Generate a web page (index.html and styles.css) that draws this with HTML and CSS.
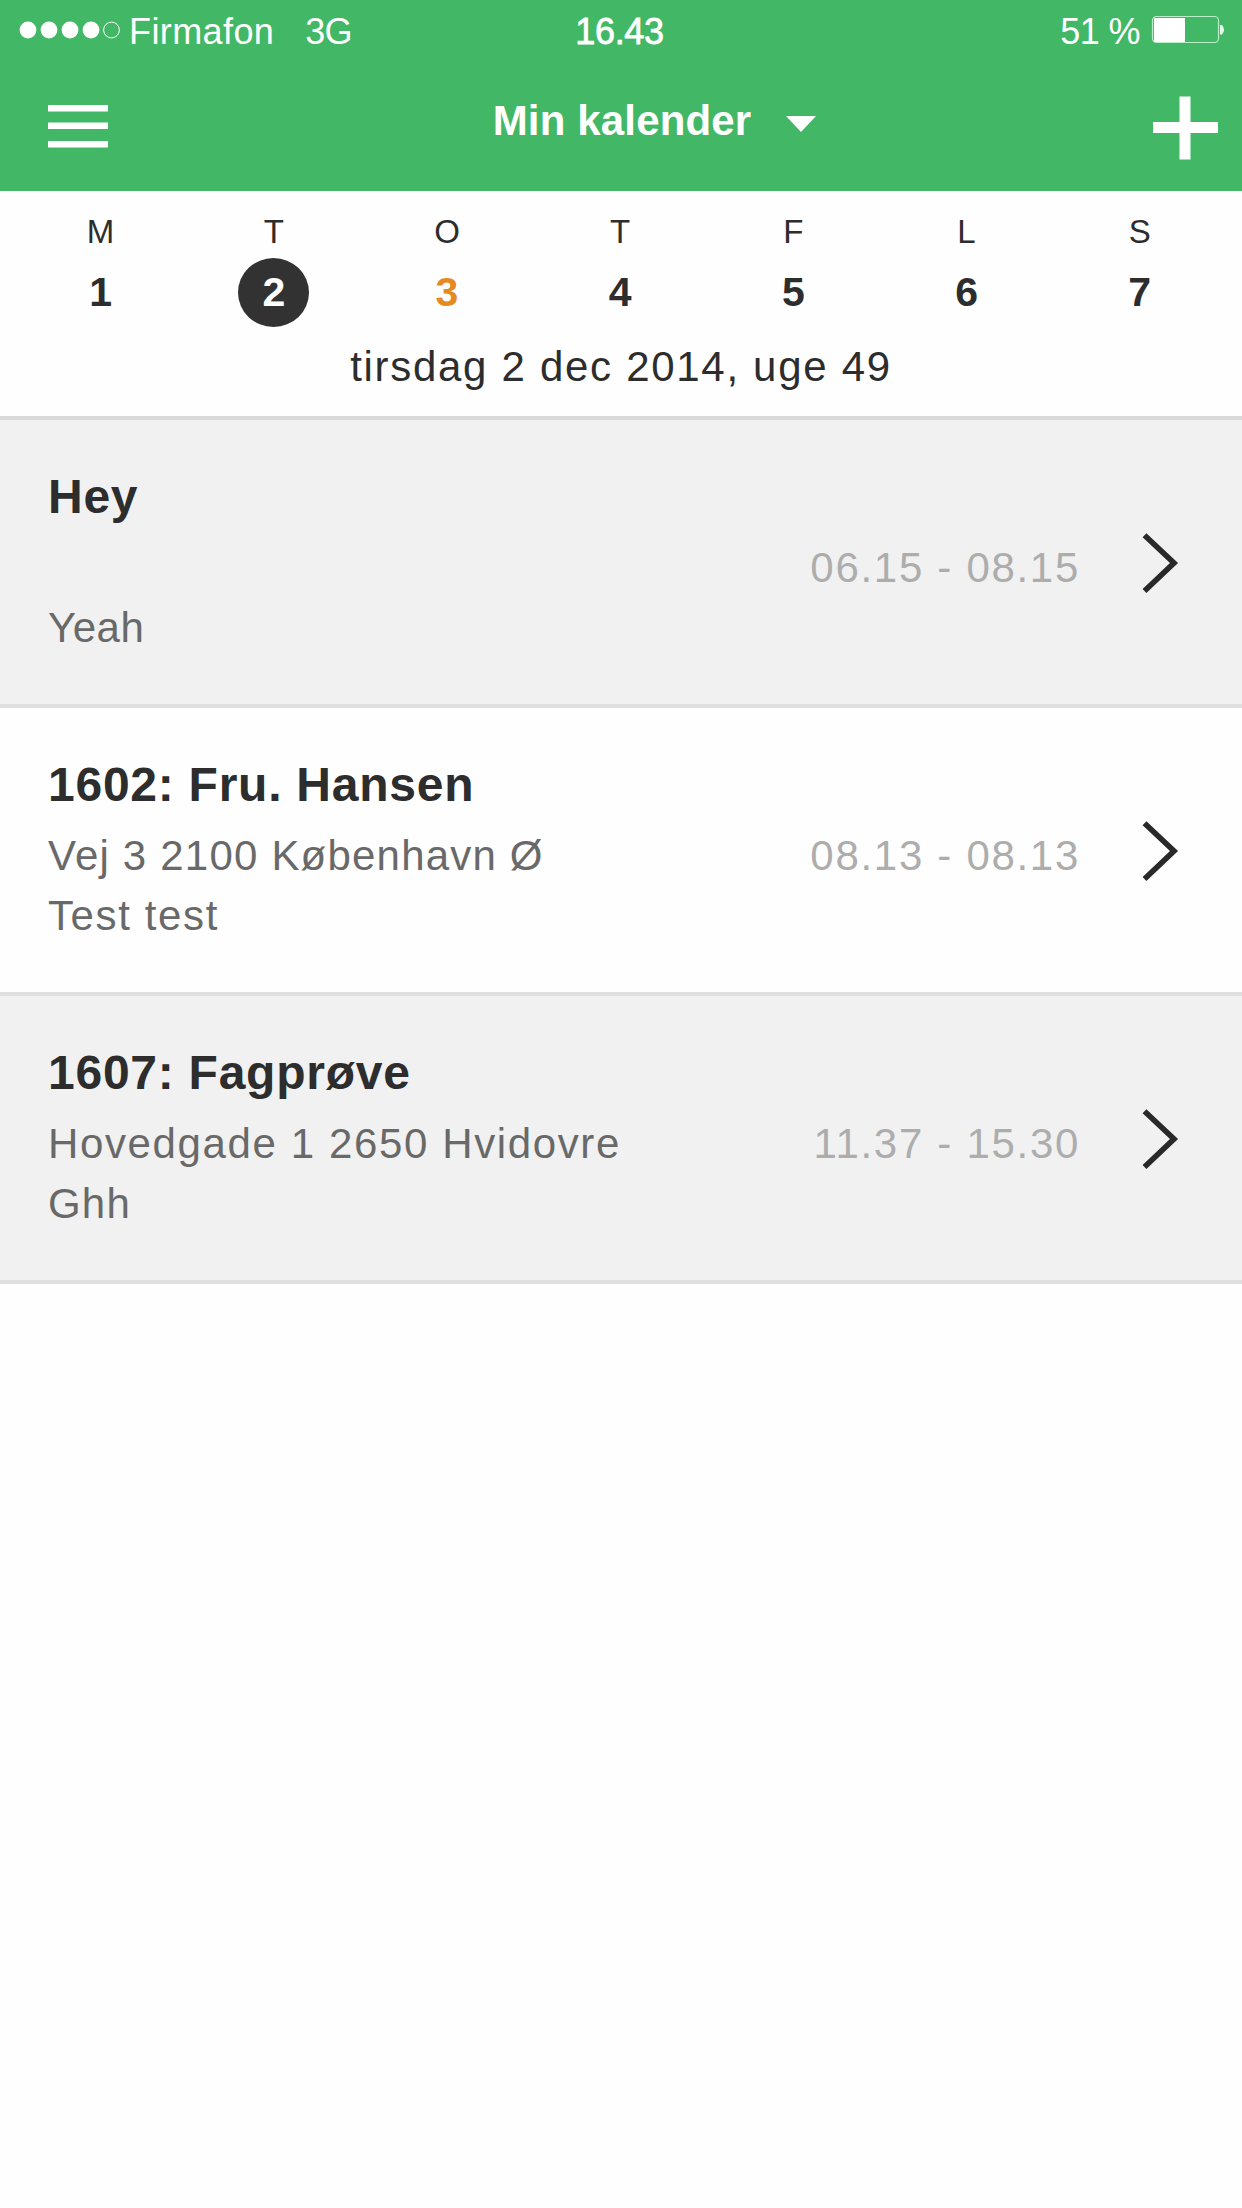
FILE: index.html
```html
<!DOCTYPE html>
<html lang="da">
<head>
<meta charset="utf-8">
<title>Min kalender</title>
<link rel="stylesheet" href="styles.css">
</head>
<body>
<header class="header">
  <div class="status">
    <div class="carrier">
      <svg class="signal" width="102" height="18" viewBox="0 0 102 18"><g fill="#fff"><circle cx="9" cy="9" r="8.4"/><circle cx="30" cy="9" r="8.4"/><circle cx="51" cy="9" r="8.4"/><circle cx="72" cy="9" r="8.4"/></g><circle cx="92.5" cy="9" r="7.9" fill="none" stroke="#fff"/></svg>
      <span class="operator">Firmafon</span>
      <span class="network">3G</span>
    </div>
    <span class="clock">16.43</span>
    <div class="power">
      <span class="percent">51 %</span>
      <svg class="battery" width="76" height="30" viewBox="0 0 76 30"><rect x="1.5" y="1.5" width="66" height="26" rx="4" fill="none" stroke="#b9efc8" stroke-width="1.2"/><path d="M4 3H34V27H4Q3 27 3 26V4Q3 3 4 3Z" fill="#fff"/><path d="M69 10h2q4 4.500 0 9.500h-2z" fill="#e5fbea"/></svg>
    </div>
  </div>
  <nav class="nav">
    <svg class="menu" width="62" height="44" viewBox="0 0 62 44"><path d="M1 4.300H61M1 21.800H61M1 40.300H61" stroke="#fff" stroke-width="6.400"/></svg>
    <div class="title"><span>Min kalender</span><svg class="caret" width="30" height="16" viewBox="0 0 30 16"><path d="M0 0H30L15 16Z" fill="#fff"/></svg></div>
    <svg class="add" width="65" height="64" viewBox="0 0 65 64"><path d="M0 31.500H65M32 0.500V63.500" stroke="#fff" stroke-width="11"/></svg>
  </nav>
</header>
<section class="week">
  <div class="days">
    <div class="day"><span class="name">M</span><span class="num">1</span></div>
    <div class="day"><span class="name">T</span><span class="num selected">2</span></div>
    <div class="day"><span class="name">O</span><span class="num today">3</span></div>
    <div class="day"><span class="name">T</span><span class="num">4</span></div>
    <div class="day"><span class="name">F</span><span class="num">5</span></div>
    <div class="day"><span class="name">L</span><span class="num">6</span></div>
    <div class="day"><span class="name">S</span><span class="num">7</span></div>
  </div>
  <div class="date">tirsdag 2 dec 2014, uge 49</div>
</section>
<main class="list">
  <article class="event">
    <div class="details"><h2>Hey</h2><p></p><p class="tight">Yeah</p></div>
    <time class="time">06.15 - 08.15</time>
    <svg class="chevron" width="38" height="62" viewBox="0 0 38 62"><path d="M2.500 3.200L32 31L2.500 59" fill="none" stroke="#292929" stroke-width="5.600"/></svg>
  </article>
  <article class="event">
    <div class="details"><h2>1602: Fru. Hansen</h2><p>Vej 3 2100 København Ø</p><p class="wide">Test test</p></div>
    <time class="time">08.13 - 08.13</time>
    <svg class="chevron" width="38" height="62" viewBox="0 0 38 62"><path d="M2.500 3.200L32 31L2.500 59" fill="none" stroke="#292929" stroke-width="5.600"/></svg>
  </article>
  <article class="event">
    <div class="details"><h2>1607: Fagprøve</h2><p class="wide">Hovedgade 1 2650 Hvidovre</p><p>Ghh</p></div>
    <time class="time">11.37 - 15.30</time>
    <svg class="chevron" width="38" height="62" viewBox="0 0 38 62"><path d="M2.500 3.200L32 31L2.500 59" fill="none" stroke="#292929" stroke-width="5.600"/></svg>
  </article>
</main>
</body>
</html>
```
FILE: styles.css
```css
* { box-sizing: border-box; }
body {
  margin: 0;
  min-height: 2208px;
  background: #fefefe;
  color: #2d2d2d;
  font-family: "Liberation Sans", Arial, sans-serif;
}
svg { display: block; flex: none; }
.header { height: 191px; background: #42b866; color: #fff; }
.status {
  display: grid;
  grid-template-columns: 1fr auto 1fr;
  height: 63px;
  padding: 0 15px 0 19px;
  font-size: 36px;
  line-height: 64px;
  white-space: nowrap;
}
.carrier { display: flex; }
.signal { margin-top: 21px; }
.operator { margin-left: 8px; letter-spacing: 0.4px; }
.network { margin-left: 31px; letter-spacing: -0.7px; }
.clock { margin-right: 7px; -webkit-text-stroke: 0.8px #fff; letter-spacing: -0.3px; }
.power { display: flex; justify-content: flex-end; }
.percent { letter-spacing: -0.6px; }
.battery { margin: 15px 0 0 11px; }
.nav {
  display: grid;
  grid-template-columns: 1fr auto 1fr;
  height: 128px;
  padding: 0 24px 0 47px;
}
.menu { margin-top: 41px; }
.title {
  display: flex;
  margin-left: 44px;
  font-size: 42px;
  font-weight: 700;
  line-height: 116px;
  letter-spacing: 0.15px;
  white-space: nowrap;
}
.caret { margin: 53px 0 0 35px; }
.add { margin-top: 33px; justify-self: end; }
.week {
  height: 229px;
  padding-top: 21px;
  border-bottom: 4px solid #dadada;
}
.days { display: grid; grid-template-columns: repeat(7, 173.2px); padding-left: 14px; }
.day { display: flex; flex-direction: column; align-items: center; }
.name { font-size: 33px; line-height: 40px; }
.num {
  width: 71px;
  height: 69px;
  margin-top: 6px;
  border-radius: 50%;
  font-size: 41px;
  font-weight: 700;
  line-height: 68px;
  text-align: center;
}
.selected { background: #323232; color: #fff; }
.today { color: #e58a22; }
.date {
  margin-top: 10px;
  font-size: 42px;
  line-height: 60px;
  letter-spacing: 1.7px;
  text-align: center;
}
.event {
  display: flex;
  height: 288px;
  padding: 47px 62px 0 48px;
  border-bottom: 4px solid #dfdfdf;
}
.event:nth-child(odd) { background: #f1f1f1; }
.details { flex: 1; }
h2 {
  margin: 0 0 11px;
  font-size: 48px;
  font-weight: 700;
  line-height: 60px;
  letter-spacing: 0.75px;
}
p {
  height: 60px;
  margin: 0;
  color: #696969;
  font-size: 42px;
  line-height: 60px;
  letter-spacing: 1.2px;
}
.wide { letter-spacing: 1.62px; }
.tight { letter-spacing: 0.5px; }
.time {
  margin-top: 71px;
  color: #adadad;
  font-size: 42px;
  line-height: 60px;
  letter-spacing: 1.7px;
}
.chevron { margin: 65px 0 0 62px; }
```
